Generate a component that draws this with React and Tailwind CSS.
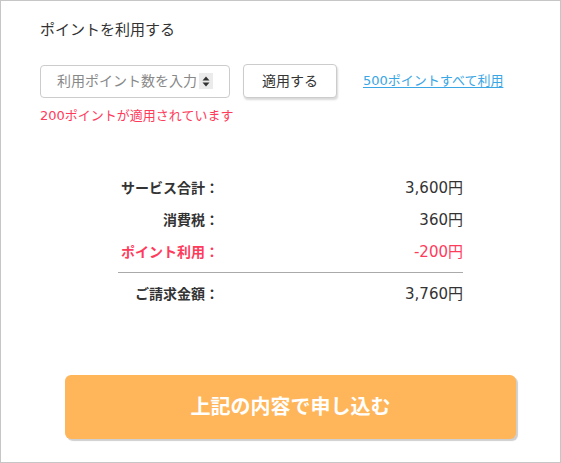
import { useState } from "react";

const rows = [
  { label: "サービス合計：", value: "3,600円" },
  { label: "消費税：", value: "360円" },
  { label: "ポイント利用：", value: "-200円", red: true },
];

const App = () => {
  const [points, setPoints] = useState("");

  return (
    <div
      className="w-[561px] h-[463px] border border-[#c6c6c6] bg-white text-[#333]"
      style={{ fontFamily: '"DejaVu Sans", "Noto Sans CJK JP", sans-serif' }}
    >
      <div className="px-[39px] pt-[18px]">
        <p className="text-[15px] leading-[22px]">ポイントを利用する</p>

        {/* 入力行 */}
        <div className="mt-[23px] flex items-center">
          <div className="flex items-center w-[190px] h-[33px] border border-[#ccc] rounded-[4px] bg-white pl-[16px] pr-[16px]">
            <input
              value={points}
              onChange={(e) => setPoints(e.target.value)}
              placeholder="利用ポイント数を入力"
              className="w-full min-w-0 bg-transparent outline-none text-[14px] text-[#333] placeholder:text-[#888]"
            />
            <span className="flex flex-col items-center justify-center w-[14px] h-[16px] bg-[#ebebeb] shrink-0 text-[#333]">
              <svg width="8" height="11" viewBox="0 0 8 11">
                <path d="M4 0.5 L7.5 4.5 H0.5 Z" fill="#333" />
                <path d="M4 10.5 L7.5 6.5 H0.5 Z" fill="#333" />
              </svg>
            </span>
          </div>
          <button className="ml-[13px] w-[94px] h-[34px] border border-[#ccc] rounded-[4px] bg-white text-[14px] text-[#333] shadow-[1px_2px_2px_rgba(0,0,0,0.15)]">
            適用する
          </button>
          <a href="#" className="ml-[26px] text-[13px] text-[#3aa6e4] underline underline-offset-2">
            500ポイントすべて利用
          </a>
        </div>

        <p className="mt-[9px] text-[13px] leading-[18px] text-[#ff3b5c]">
          200ポイントが適用されています
        </p>

        {/* 金額 */}
        <div className="mt-[47px] ml-[78px] w-[345px] text-[14px]">
          {rows.map((r) => (
            <div key={r.label} className="flex items-center h-8">
              <span className={`w-[101px] text-right font-bold ${r.red ? "text-[#ff3b5c]" : ""}`}>{r.label}</span>
              <span className={`flex-1 text-right text-[15px] ${r.red ? "text-[#ff3b5c]" : ""}`}>{r.value}</span>
            </div>
          ))}
          <div className="mt-[4px] border-t border-[#aaa]" />
          <div className="mt-[5px] flex items-center h-8">
            <span className="w-[101px] text-right font-bold">ご請求金額：</span>
            <span className="flex-1 text-right text-[15px]">3,760円</span>
          </div>
        </div>
      </div>

      <button className="mt-[65px] ml-[64px] w-[451px] h-[64px] rounded-[6px] bg-[#ffb65a] text-white text-[20px] font-bold shadow-[2px_2px_1px_#cfcfcf]">
        上記の内容で申し込む
      </button>
    </div>
  );
};

export default App;
